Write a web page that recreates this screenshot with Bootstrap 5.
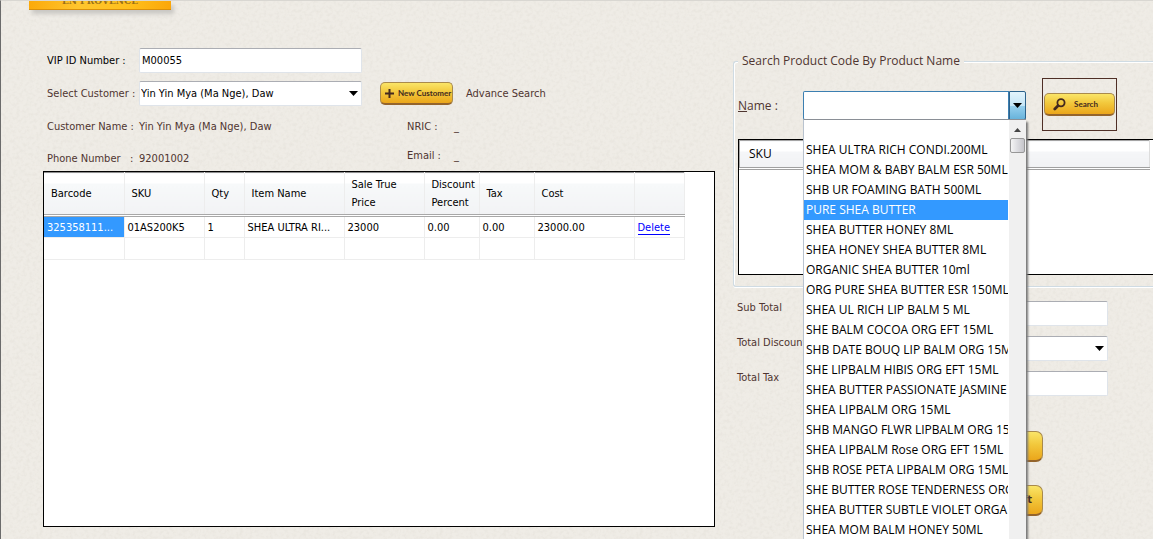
<!DOCTYPE html>
<html lang="en">
<head>
<meta charset="utf-8">
<meta name="viewport" content="width=device-width, initial-scale=1">
<title>Point of Sale</title>
<link href="https://cdn.jsdelivr.net/npm/bootstrap@5.3.0/dist/css/bootstrap.min.css" rel="stylesheet">
<style>
:root { --ink: #4f3530; --pick: #3399ff; }
body {
  font-family: "DejaVu Sans Condensed", "Liberation Sans", sans-serif;
  font-size: 11px; line-height: 16px; color: var(--ink);
  background-color: #efece6;
  background-image: url("data:image/svg+xml,%3Csvg xmlns='http://www.w3.org/2000/svg' width='200' height='200'%3E%3Cfilter id='n'%3E%3CfeTurbulence type='fractalNoise' baseFrequency='.3' numOctaves='2' stitchTiles='stitch'/%3E%3CfeColorMatrix values='0 0 0 0 .5 0 0 0 0 .47 0 0 0 0 .4 .5 0 0 0 -.2'/%3E%3C/filter%3E%3Crect width='200' height='200' filter='url(%23n)' opacity='.55'/%3E%3C/svg%3E");
}
.screen { height: 100vh; min-height: 480px; border-left: 1px solid #6b6b6b; border-top: 1px solid #d9d7d2; }
.large-text { font-family: "Open Sans", "Noto Sans", sans-serif; font-size: 12px; }

.brand { width: 142px; height: 9px; margin-left: 28px; margin-bottom: 38px; color: #9b7118;
  background: linear-gradient(100deg, #fba90a, #ffc52e 35%, #ffc01c 70%, #fba60a);
  border-bottom: 1px solid #d9900c; box-shadow: 3px 4px 4px #c9c7c3; }
.brand span { font: bold 9px/1px "DejaVu Serif", serif; }

.panes { display: grid; grid-template-columns: minmax(0, 672fr) minmax(0, 420fr); column-gap: 18px; padding-left: 42px; }
.label-cell { width: 96px; padding-left: 4px; flex: none; }

.field { height: 25px; padding: 0 2px; font: inherit; color: #000; background-color: #fff;
  border: 1px solid #dfe4ea; border-top-color: #abadb3; border-radius: 2px; outline: 0; box-shadow: none; }
select.field { appearance: none; padding-left: 1px;
  background: #fff url("data:image/svg+xml,%3Csvg xmlns='http://www.w3.org/2000/svg' width='9' height='5'%3E%3Cpath d='M0 0h9L4.500 5z'/%3E%3C/svg%3E") no-repeat right 3px center; }
.vip { width: 223px; }
.customer { width: 223px; }

.gold { color: #43291f; font-size: 9px; line-height: 12px; font-weight: 700;
  height: 23px; padding: 0 4px; border: 1px solid #a98a4c; border-bottom: 2px solid #94642c; border-radius: 5px;
  background: linear-gradient(#fae568, #f2c83c 45%, #eba61b); white-space: nowrap; }
.gold .caption-text { font: 700 8px/12px Lato, "Open Sans", sans-serif; }
.gold-add { width: 73px; margin-left: 18px; }
.gold-big { height: 31px; width: 112px; font-size: 11px; padding: 0 10px; border-radius: 7px; }
.advance { margin-left: 13px; }

.details { padding: 13px 0 4px; }
.left-facts { width: 364px; }
.fact-name { width: 47px; }
.second { margin-top: 13px; }

.grid-box { background: #fff; border: 1px solid #000; color: #000; }
.cart-box { margin-bottom: 12px; }
.cart { width: 640px; table-layout: fixed; margin: 0; color: #000; --bs-table-color: #000; line-height: 18px; border-top: 1px solid #8e8e8e; }
.cart > :not(caption) > * > * { border: 0 solid #ededed; border-width: 0 1px 1px 0; padding: 1px 0 0 3px; height: 22px; white-space: nowrap; vertical-align: middle; box-shadow: none; }
.cart > thead > tr > th { height: 43px; font-weight: 400; padding: 1px 1px 0 7px; white-space: normal; border-bottom: 3px double #a8a8a8;
  background: linear-gradient(#fff 10px, #f7f9fa 10px, #f2f3f5); }
.cart > tbody > tr > td.picked { background: var(--pick); color: #fff; }
.cart a { color: #00f; text-decoration: none; border-bottom: 1px solid #00f; }

.finder { border: 1px solid #cfdbe3; border-right: 0; border-radius: 3px 0 0 3px; box-shadow: inset 1px 1px #fff, 0 1px #fff; padding-left: 4px; margin-top: 4px; }
.finder legend { float: none; width: auto; font-size: 12px; line-height: 18px; height: 18px; margin: -10px 0 8px; padding: 0 4px; background: #edeae4; }
.name-label { width: 65px; flex: none; }
.combo { width: 223px; height: 29px; margin-top: 13px; position: relative; }
.combo input { min-width: 0; border: 1px solid #3c7fb1; border-bottom-color: #a9cfe6; border-radius: 2px 0 0 2px; outline: 0; }
.combo button { width: 17px; border: 1px solid #2c628b; border-radius: 0 2px 2px 0; padding: 0;
  background: linear-gradient(#e3f4fc, #c4e5f6 50%, #98d1ef 50%, #68b3db); }
.menu-list { position: absolute; top: 28px; left: 0; z-index: 5; width: 223px; background: #fff; color: #000;
  border: 1px solid #8a8f96; border-right: 0; border-left-color: #b9c3cf; box-shadow: 2px 3px 2px #777; }
.menu-list ul { min-width: 0; line-height: 20px; }
.menu-list li { height: 20px; padding-left: 2px; white-space: nowrap; overflow: hidden; }
.menu-list li[aria-selected=true] { background: var(--pick); color: #fff; }
.scroll-track { width: 17px; flex: none; margin-left: 1px; background: #f0f0f0; }
.scroll-track svg { display: block; margin: 8px auto 6px; }
.thumb { width: 15px; height: 15px; margin: 0 auto; border: 1px solid #979797; border-radius: 2px; background: linear-gradient(90deg, #f4f4f4, #dcdce0 50%, #c5c5ca); }
.search-frame { width: 75px; height: 53px; border: 1px solid #4f2f26; margin-left: 16px; padding: 0 1px; }

.result-box { height: 136px; margin: 8px 0 11px; border-right: 0; }
.result-box table { width: calc(100% - 3px); }
.result-box th { height: 28px; padding: 0 9px; font-weight: 400;
  border: 1px solid #a5a5a5; border-right-color: #ddd; border-bottom: 3px double #a0a0a0; background: linear-gradient(#fff 10px, #f5f6f8 10px, #f1f2f4); }

.totals { padding: 14px 45px 0 4px; }
.totals .label-cell { padding-left: 0; width: 92px; }
.total-row { height: 35px; }
.totals label { line-height: 14px; }
.actions { padding: 25px 0 0 198px; gap: 23px; }
</style>
</head>
<body>
<main class="screen overflow-hidden d-flex flex-column">
  <div class="brand d-flex justify-content-center align-items-start"><span>EN PROVENCE</span></div>

  <div class="panes flex-grow-1">
    <section class="d-flex flex-column">
      <div class="d-flex align-items-center mb-2">
        <label class="label-cell text-black" for="vip">VIP ID Number :</label>
        <input id="vip" class="field vip" value="M00055">
      </div>
      <div class="d-flex align-items-center">
        <label class="label-cell" for="customer">Select Customer :</label>
        <select id="customer" class="field customer"><option>Yin Yin Mya (Ma Nge), Daw</option></select>
        <button type="button" class="gold gold-add d-flex align-items-center gap-1">
          <svg width="9" height="9" viewBox="0 0 9 9" class="flex-shrink-0" aria-hidden="true"><path d="M3.500 0h2v3.500H9v2H5.500V9h-2V5.500H0v-2h3.500z" fill="#43291f"/></svg>
          <span class="caption-text">New Customer</span>
        </button>
        <a href="#" class="advance text-reset text-decoration-none">Advance Search</a>
      </div>
      <div class="details d-flex">
        <div class="left-facts">
          <div class="d-flex"><span class="label-cell">Customer Name :</span><span>Yin Yin Mya (Ma Nge), Daw</span></div>
          <div class="d-flex mt-3"><span class="label-cell">Phone Number &nbsp;&nbsp;:</span><span>92001002</span></div>
        </div>
        <div class="right-facts">
          <div class="d-flex"><span class="fact-name">NRIC :</span><span>_</span></div>
          <div class="d-flex second"><span class="fact-name">Email :</span><span>_</span></div>
        </div>
      </div>
      <div class="grid-box cart-box flex-grow-1 overflow-hidden">
        <table class="table cart">
          <colgroup><col style="width:80px"><col style="width:80px"><col style="width:40px"><col style="width:100px"><col style="width:80px"><col style="width:55px"><col style="width:55px"><col style="width:100px"><col style="width:50px"></colgroup>
          <thead><tr><th>Barcode</th><th>SKU</th><th>Qty</th><th>Item Name</th><th>Sale True Price</th><th>Discount Percent</th><th>Tax</th><th>Cost</th><th></th></tr></thead>
          <tbody>
            <tr><td class="picked">325358111...</td><td>01AS200K5</td><td>1</td><td>SHEA ULTRA RI...</td><td>23000</td><td>0.00</td><td>0.00</td><td>23000.00</td><td><a href="#">Delete</a></td></tr>
            <tr><td></td><td></td><td></td><td></td><td></td><td></td><td></td><td></td><td></td></tr>
          </tbody>
        </table>
      </div>
    </section>

    <section>
      <fieldset class="finder">
        <legend class="large-text">Search Product Code By Product Name</legend>
        <div class="d-flex large-text">
          <label class="name-label pt-3 mt-1" for="pname"><u>N</u>ame :</label>
          <div class="combo d-flex">
            <input id="pname" class="flex-grow-1" role="combobox" aria-expanded="true" aria-controls="products">
            <button type="button" aria-label="Open list"><svg width="9" height="5" viewBox="0 0 9 5" class="d-block mx-auto"><path d="M0 0h9L4.500 5z"/></svg></button>
            <div class="menu-list d-flex">
              <ul id="products" role="listbox" class="list-unstyled mb-0 flex-grow-1">
                <li role="option"></li>
                <li role="option">SHEA ULTRA RICH CONDI.200ML</li>
                <li role="option">SHEA MOM &amp; BABY BALM ESR 50ML</li>
                <li role="option">SHB UR FOAMING BATH 500ML</li>
                <li role="option" aria-selected="true">PURE SHEA BUTTER</li>
                <li role="option">SHEA BUTTER HONEY 8ML</li>
                <li role="option">SHEA HONEY SHEA BUTTER 8ML</li>
                <li role="option">ORGANIC SHEA BUTTER 10ml</li>
                <li role="option">ORG PURE SHEA BUTTER ESR 150ML</li>
                <li role="option">SHEA UL RICH LIP BALM 5 ML</li>
                <li role="option">SHE BALM COCOA ORG EFT 15ML</li>
                <li role="option">SHB DATE BOUQ LIP BALM ORG 15ML</li>
                <li role="option">SHE LIPBALM HIBIS ORG EFT 15ML</li>
                <li role="option">SHEA BUTTER PASSIONATE JASMINE</li>
                <li role="option">SHEA LIPBALM ORG 15ML</li>
                <li role="option">SHB MANGO FLWR LIPBALM ORG 15ML</li>
                <li role="option">SHEA LIPBALM Rose ORG EFT 15ML</li>
                <li role="option">SHB ROSE PETA LIPBALM ORG 15ML</li>
                <li role="option">SHE BUTTER ROSE TENDERNESS ORG</li>
                <li role="option">SHEA BUTTER SUBTLE VIOLET ORGA</li>
                <li role="option">SHEA MOM BALM HONEY 50ML</li>
              </ul>
              <div class="scroll-track">
                <svg width="7" height="4" viewBox="0 0 7 4"><path d="M0 4h7L3.500 0z" fill="#444"/></svg>
                <div class="thumb"></div>
              </div>
            </div>
          </div>
          <div class="search-frame d-flex align-items-center">
            <button type="button" class="gold w-100 d-flex align-items-center ps-2 gap-2">
              <svg width="13" height="13" viewBox="0 0 13 13" fill="none" stroke="#43291f" aria-hidden="true"><circle cx="8" cy="4.800" r="3.600" stroke-width="1.800"/><path d="M5 7.800 1.800 11" stroke-width="2.800" stroke-linecap="round"/></svg>
              <span class="caption-text">Search</span>
            </button>
          </div>
        </div>
        <div class="grid-box result-box">
          <table class="large-text"><thead><tr><th>SKU</th></tr></thead></table>
        </div>
      </fieldset>
      <div class="totals">
        <div class="total-row d-flex"><label class="label-cell" for="sub">Sub Total</label><input id="sub" class="field flex-grow-1"></div>
        <div class="total-row d-flex"><label class="label-cell" for="disc">Total Discount</label><select id="disc" class="field flex-grow-1"><option></option></select></div>
        <div class="total-row d-flex"><label class="label-cell" for="tax">Total Tax</label><input id="tax" class="field flex-grow-1"></div>
      </div>
      <div class="actions d-flex flex-column">
        <button type="button" class="gold gold-big text-start">Paid</button>
        <button type="button" class="gold gold-big text-end">Save As Draft</button>
      </div>
    </section>
  </div>
</main>
<script src="https://cdn.jsdelivr.net/npm/bootstrap@5.3.0/dist/js/bootstrap.bundle.min.js"></script>
</body>
</html>
